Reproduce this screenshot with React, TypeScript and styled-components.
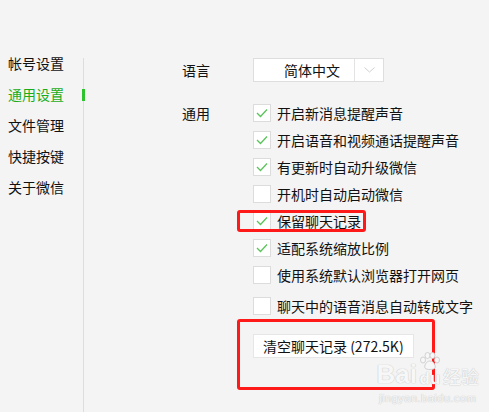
import React from "react";
import styled, { createGlobalStyle } from "styled-components";

const Global = createGlobalStyle`
  html, body { margin: 0; padding: 0; background: #f4f4f4; }
  body { font-family: "Noto Sans CJK SC", "Noto Sans", sans-serif; }
`;

const Page = styled.div`
  position: relative;
  display: flex;
  width: 489px;
  height: 412px;
  overflow: hidden;
  background: #f4f4f4;
  color: #111;
  font-size: 14px;
`;

const Sidebar = styled.nav`
  width: 75px;
  padding: 53px 0 0 8px;
  display: flex;
  flex-direction: column;
`;

const NavItem = styled.div<{ $active?: boolean }>`
  height: 31px;
  line-height: 21px;
  font-size: 14px;
  color: ${(p) => (p.$active ? "#1aad19" : "#111")};
  white-space: nowrap;
`;

const Divider = styled.div`
  position: relative;
  width: 1px;
  margin-top: 58px;
  background: #dddddd;
`;

const Indicator = styled.span`
  position: absolute;
  left: -1px;
  top: 31px;
  width: 3px;
  height: 12px;
  background: #2ec22e;
`;

const Content = styled.main`
  flex: 1;
  padding: 58px 0 0 98px;
  display: grid;
  grid-template-columns: 71px auto;
  align-content: start;
  row-gap: 22px;
`;

const Label = styled.div<{ $h: number }>`
  height: ${(p) => p.$h}px;
  line-height: ${(p) => p.$h}px;
  white-space: nowrap;
`;

const Select = styled.div`
  display: flex;
  width: 129px;
  height: 22px;
  border: 1px solid #dedede;
  background: #fff;
`;

const SelectValue = styled.div`
  width: 70px;
  padding-left: 30px;
  line-height: 22px;
  border-right: 1px solid #e3e3e3;
`;

const SelectArrow = styled.div`
  flex: 1;
  display: flex;
  align-items: center;
  justify-content: center;
`;

const Options = styled.div`
  display: flex;
  flex-direction: column;
`;

const Row = styled.label<{ $gap?: number }>`
  position: relative;
  display: flex;
  align-items: center;
  height: 18px;
  margin-bottom: 9px;
  margin-top: ${(p) => p.$gap ?? 0}px;
  white-space: nowrap;
`;

const Box = styled.span`
  box-sizing: border-box;
  width: 18px;
  height: 18px;
  border: 1px solid #dcdcdc;
  background: #fff;
  margin-right: 6px;
  display: flex;
  align-items: center;
  justify-content: center;
`;

const Mark = styled.span`
  position: absolute;
  border: 3px solid #ff1a1a;
  border-radius: 3px;
  pointer-events: none;
`;

const RowMark = styled(Mark)`
  left: -16px;
  top: -2px;
  width: 123px;
  height: 16px;
`;

const ButtonArea = styled.div`
  position: relative;
  margin-top: 10px;
`;

const ButtonMark = styled(Mark)`
  left: -16px;
  top: -15px;
  width: 192px;
  height: 65px;
`;

const Button = styled.button`
  box-sizing: border-box;
  width: 161px;
  height: 24px;
  padding: 0 0 0 9px;
  text-align: left;
  border: 1px solid #e6e6e6;
  background: #fff;
  font-family: "Noto Sans CJK SC", "Noto Sans", sans-serif;
  font-size: 14px;
  color: #111;
  white-space: nowrap;
`;

const Watermark = styled.div`
  position: absolute;
  right: 10px;
  bottom: 8px;
  display: flex;
  flex-direction: column;
  align-items: center;
  color: #f7f7f7;
  font-family: "Liberation Sans", Arial, sans-serif;
  text-shadow: 0 0 1px #c8c8c8, 0 0 1px #c8c8c8;
  pointer-events: none;
`;

const WmTop = styled.div`
  display: flex;
  align-items: flex-end;
  font-size: 26px;
  font-weight: bold;
  line-height: 28px;
`;

const WmDu = styled.div`
  display: flex;
  flex-direction: column;
  align-items: center;
  font-size: 17px;
  line-height: 18px;
  margin: 0 2px;
`;

const WmCn = styled.span`
  font-family: "Noto Sans CJK SC", sans-serif;
  font-size: 18px;
  font-weight: normal;
  line-height: 24px;
`;

const WmUrl = styled.div`
  font-size: 11px;
  letter-spacing: 0.5px;
  margin-top: 4px;
`;

const Check = () => (
  <svg width="12" height="10" viewBox="0 0 12 10">
    <path d="M1 5 L4.5 8.5 L11 1.5" fill="none" stroke="#5ac35a" strokeWidth="1.3" />
  </svg>
);

const options: { text: string; checked: boolean; gap?: number; mark?: boolean }[] = [
  { text: "开启新消息提醒声音", checked: true },
  { text: "开启语音和视频通话提醒声音", checked: true },
  { text: "有更新时自动升级微信", checked: true },
  { text: "开机时自动启动微信", checked: false },
  { text: "保留聊天记录", checked: true, mark: true },
  { text: "适配系统缩放比例", checked: true },
  { text: "使用系统默认浏览器打开网页", checked: false },
  { text: "聊天中的语音消息自动转成文字", checked: false, gap: 4 },
];

export default function App() {
  return (
    <Page>
      <Global />
      <Sidebar>
        <NavItem>帐号设置</NavItem>
        <NavItem $active>通用设置</NavItem>
        <NavItem>文件管理</NavItem>
        <NavItem>快捷按键</NavItem>
        <NavItem>关于微信</NavItem>
      </Sidebar>
      <Divider>
        <Indicator />
      </Divider>
      <Content>
        <Label $h={24}>语言</Label>
        <Select>
          <SelectValue>简体中文</SelectValue>
          <SelectArrow>
            <svg width="11" height="6" viewBox="0 0 11 6">
              <path d="M0.5 0.5 L5.5 5 L10.5 0.5" fill="none" stroke="#cfcfcf" strokeWidth="1" />
            </svg>
          </SelectArrow>
        </Select>
        <Label $h={18}>通用</Label>
        <Options>
          {options.map((o) => (
            <Row key={o.text} $gap={o.gap}>
              <Box>{o.checked && <Check />}</Box>
              {o.text}
              {o.mark && <RowMark />}
            </Row>
          ))}
          <ButtonArea>
            <Button>清空聊天记录 (272.5K)</Button>
            <ButtonMark />
          </ButtonArea>
        </Options>
      </Content>
      <Watermark>
        <WmTop>
          Bai
          <WmDu>
            <svg width="22" height="18" viewBox="0 0 22 18">
              <g fill="#f7f7f7" stroke="#c8c8c8" strokeWidth="0.8">
                <ellipse cx="4" cy="8" rx="2.5" ry="3" />
                <ellipse cx="8.5" cy="3.5" rx="2.5" ry="3" />
                <ellipse cx="13.5" cy="3.5" rx="2.5" ry="3" />
                <ellipse cx="18" cy="8" rx="2.5" ry="3" />
                <path d="M11 9 C7 9 5 14 6 16 C7 18 15 18 16 16 C17 14 15 9 11 9 Z" />
              </g>
            </svg>
            du
          </WmDu>
          <WmCn>经验</WmCn>
        </WmTop>
        <WmUrl>jingyan.baidu.com</WmUrl>
      </Watermark>
    </Page>
  );
}
